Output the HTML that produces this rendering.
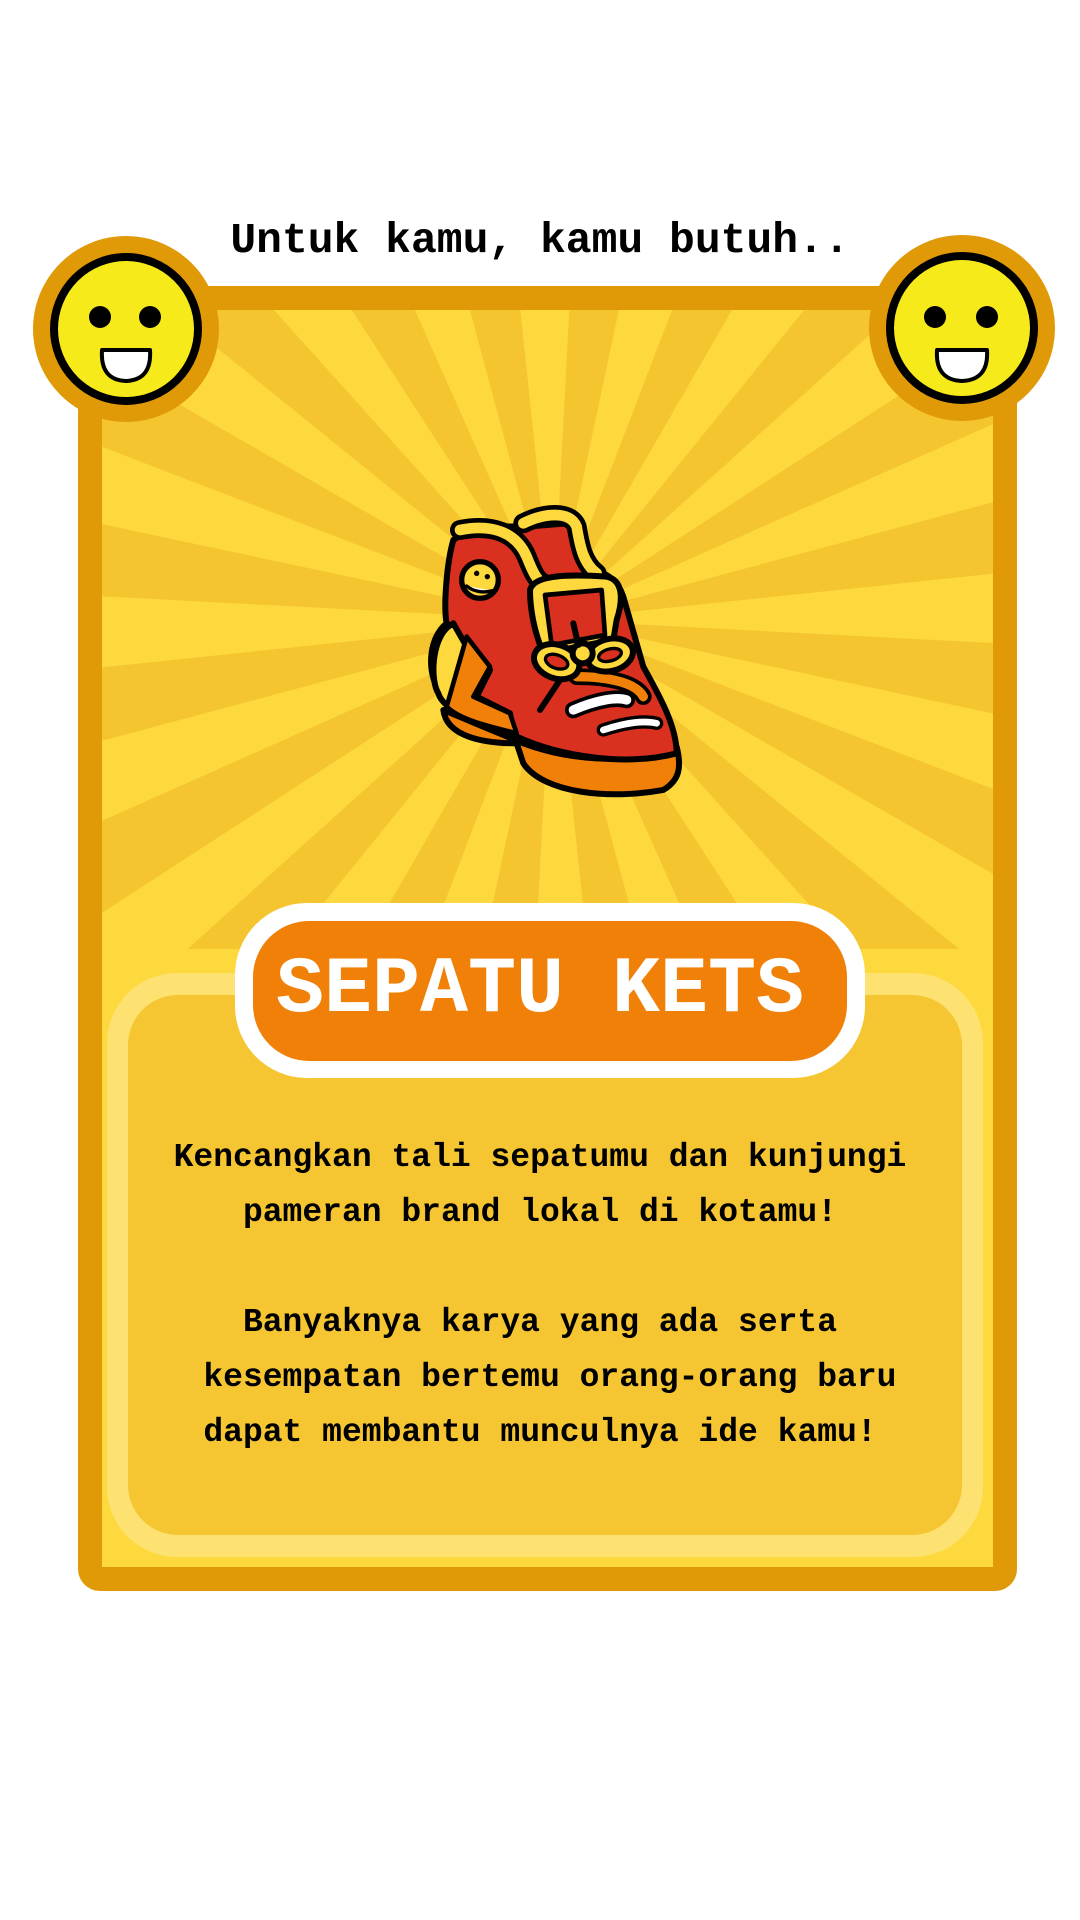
<!DOCTYPE html>
<html><head><meta charset="utf-8"><style>
html,body{margin:0;padding:0;background:#fff;width:1080px;height:1920px;overflow:hidden;}
body{position:relative;font-family:"Liberation Mono",monospace;}
svg{position:absolute;left:0;top:0;display:block;}
.t{position:absolute;left:0;width:1080px;text-align:center;color:#000;font-weight:bold;white-space:pre;}
</style></head><body>
<svg width="1080" height="1920" viewBox="0 0 1080 1920">
<defs>
<clipPath id="cc"><rect x="102" y="310" width="891" height="639"/></clipPath>
</defs>
<rect x="78" y="286" width="939" height="1305" rx="22" fill="#e09a08"/>
<rect x="102" y="310" width="891" height="1257" fill="#fdd93e"/>
<g clip-path="url(#cc)" fill="#f5c530">
<g id="rays"></g>
</g>
<rect x="107" y="973" width="876" height="584" rx="70" fill="#fde272"/>
<rect x="128" y="995" width="834" height="540" rx="50" fill="#f5c632"/>
<rect x="235" y="903" width="630" height="175" rx="72" fill="#fff"/>
<rect x="253" y="921" width="594" height="140" rx="56" fill="#f08008"/>
<g>
<circle cx="126" cy="329" r="93" fill="#e09a08"/>
<circle cx="126" cy="329" r="72" fill="#f7ea1a" stroke="#000" stroke-width="8"/>
<circle cx="100" cy="317" r="11" fill="#000"/><circle cx="150" cy="317" r="11" fill="#000"/>
<path d="M102 350 L150 350 Q152 380 126 381 Q100 380 102 350 Z" fill="#fff" stroke="#000" stroke-width="4" stroke-linejoin="round"/>
</g>
<g>
<circle cx="962" cy="328" r="93" fill="#e09a08"/>
<circle cx="962" cy="328" r="72" fill="#f7ea1a" stroke="#000" stroke-width="8"/>
<circle cx="935" cy="317" r="11" fill="#000"/><circle cx="987" cy="317" r="11" fill="#000"/>
<path d="M937 350 L987 350 Q989 380 962 381 Q935 380 937 350 Z" fill="#fff" stroke="#000" stroke-width="4" stroke-linejoin="round"/>
</g>
<g transform="translate(410,480) scale(0.3333)" stroke="#000" stroke-width="18" stroke-linejoin="round" stroke-linecap="round">
<path d="M100,690 C110,770 220,790 320,790 L340,850 C400,940 600,960 760,930 C810,900 815,860 800,800 C700,850 500,850 340,790 Z" fill="#f08008"/>
<path d="M130,180 C110,250 100,380 110,430 C60,470 50,560 80,620 C100,700 200,740 320,770 C450,830 650,860 800,820 C800,740 750,650 700,560 L640,350 C620,290 580,280 540,260 C520,200 500,160 470,130 L350,140 C300,140 200,130 130,180 Z" fill="#d93020"/>
<path d="M115,440 C65,480 60,600 85,640 C100,690 180,720 310,760 L300,700 L200,650 L240,570 L170,500 L130,430 Z" fill="#fdd93e"/>
<path d="M170,470 L240,560 L190,650 L300,700 L320,760 C240,740 150,720 110,680 Z" fill="#f08008" stroke-width="14"/>
<path d="M150,150 C250,130 320,160 350,230 C370,280 380,300 400,310" fill="none" stroke-width="60"/>
<path d="M150,150 C250,130 320,160 350,230 C370,280 380,300 400,310" fill="none" stroke="#fdd93e" stroke-width="32"/>
<path d="M340,130 C400,100 480,90 500,140 C510,200 520,250 560,280" fill="none" stroke-width="60"/>
<path d="M340,130 C400,100 480,90 500,140 C510,200 520,250 560,280" fill="none" stroke="#fdd93e" stroke-width="32"/>
<path d="M360,330 C370,290 450,280 590,290 C640,300 640,360 620,420 L610,480 L400,520 C370,450 360,380 360,330 Z" fill="#fdd93e"/>
<path d="M405,345 L575,330 L585,465 L425,495 Z" fill="#d93020" stroke-width="14"/>
<path d="M500,590 C600,590 680,610 700,650" fill="none" stroke-width="50"/>
<path d="M500,590 C600,590 680,610 700,650" fill="none" stroke="#f08008" stroke-width="28"/>
<path d="M490,690 C560,660 620,650 650,660" fill="none" stroke-width="50"/>
<path d="M490,690 C560,660 620,650 650,660" fill="none" stroke="#fff" stroke-width="28"/>
<path d="M580,750 C640,730 700,720 740,730" fill="none" stroke-width="40"/>
<path d="M580,750 C640,730 700,720 740,730" fill="none" stroke="#fff" stroke-width="20"/>
<ellipse cx="440" cy="545" rx="70" ry="50" fill="#fdd93e" transform="rotate(20 440 545)"/>
<ellipse cx="440" cy="545" rx="35" ry="20" fill="#d93020" stroke-width="10" transform="rotate(20 440 545)"/>
<ellipse cx="600" cy="525" rx="70" ry="48" fill="#fdd93e" transform="rotate(-15 600 525)"/>
<ellipse cx="600" cy="525" rx="35" ry="18" fill="#d93020" stroke-width="10" transform="rotate(-15 600 525)"/>
<circle cx="518" cy="520" r="30" fill="#fdd93e"/>
<path d="M490,430 L505,495" fill="none"/>
<path d="M450,600 L390,690" fill="none"/>
<circle cx="210" cy="300" r="55" fill="#fdd93e" stroke-width="16"/>
<circle cx="200" cy="280" r="8" fill="#000" stroke="none"/><circle cx="232" cy="290" r="8" fill="#000" stroke="none"/>
<path d="M170,318 C190,335 220,340 248,332" fill="#fff" stroke-width="10"/>
</g>
</svg>
<div class="t" style="top:216px;font-size:43px;">Untuk kamu, kamu butuh..</div>
<div class="t" style="top:945px;font-size:80px;color:#fff;">SEPATU KETS</div>
<div class="t" style="top:1130px;font-size:33px;line-height:55px;">Kencangkan tali sepatumu dan kunjungi
pameran brand lokal di kotamu!

Banyaknya karya yang ada serta
 kesempatan bertemu orang-orang baru
dapat membantu munculnya ide kamu!</div>
<script>
(function(){var g=document.getElementById('rays');var cx=553,cy=620,R=1600,s='';
for(var i=0;i<40;i+=2){var a1=(i*9+3)*Math.PI/180,a2=((i+1)*9+3)*Math.PI/180;
s+='<polygon points="'+cx+','+cy+' '+(cx+R*Math.cos(a1))+','+(cy+R*Math.sin(a1))+' '+(cx+R*Math.cos(a2))+','+(cy+R*Math.sin(a2))+'"/>';}
g.innerHTML=s;})();
</script>
</body></html>
